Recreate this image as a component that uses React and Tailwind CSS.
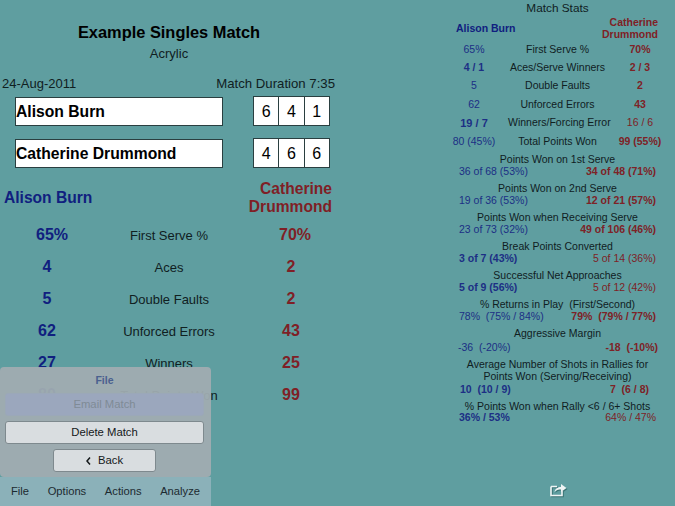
import React from "react";

const LEFT_STATS = [
  ["65%", "First Serve %", "70%"],
  ["4", "Aces", "2"],
  ["5", "Double Faults", "2"],
  ["62", "Unforced Errors", "43"],
  ["27", "Winners", "25"],
  ["80", "Total Points Won", "99"],
];

// [left, label, right, left bold, right bold, row height]
const TOP_ROWS = [
  ["65%", "First Serve %", "70%", false, true, 18],
  ["4 / 1", "Aces/Serve Winners", "2 / 3", true, true, 18],
  ["5", "Double Faults", "2", false, true, 18],
  ["62", "Unforced Errors", "43", false, true, 19],
  ["19 / 7", "Winners/Forcing Error", "16 / 6", true, false, 18],
  ["80 (45%)", "Total Points Won", "99 (55%)", false, true, 19],
];

const BLOCKS = [
  ["Points Won on 1st Serve", "36 of 68 (53%)", "34 of 48 (71%)", false, true],
  ["Points Won on 2nd Serve", "19 of 36 (53%)", "12 of 21 (57%)", false, true],
  ["Points Won when Receiving Serve", "23 of 73 (32%)", "49 of 106 (46%)", false, true],
  ["Break Points Converted", "3 of 7 (43%)", "5 of 14 (36%)", true, false],
  ["Successful Net Approaches", "5 of 9 (56%)", "5 of 12 (42%)", true, false],
  ["% Returns in Play  (First/Second)", "78%  (75% / 84%)", "79%  (79% / 77%)", false, true],
];

function NameRow({ name, scores }) {
  return (
    <div className="flex h-[30px] items-center pl-[15px]">
      <div className="flex h-[29px] w-[208px] items-center border border-[#2a3f40] bg-white pt-[2px] text-[15.7px] font-bold text-black">
        {name}
      </div>
      <div className="ml-[30px] flex h-[30px] w-[77px] border border-[#2a3f40] bg-white">
        {scores.map((s, i) => (
          <div
            key={i}
            className={`flex flex-1 items-center justify-center pt-[2px] text-[16px] text-black ${i > 0 ? "border-l border-[#2a3f40]" : ""}`}
          >
            {s}
          </div>
        ))}
      </div>
    </div>
  );
}

function ValuePair({ left, right, leftBold, rightBold }) {
  return (
    <div className="flex h-[12px] items-center justify-between pl-[19px] pr-[19px] leading-[12px]">
      <span className={`whitespace-pre text-[#1c2f85] ${leftBold ? "font-bold" : ""}`}>{left}</span>
      <span className={`whitespace-pre text-[#7e2226] ${rightBold ? "font-bold" : ""}`}>{right}</span>
    </div>
  );
}

function MenuButton({ children, className }) {
  return (
    <div className={`flex items-center justify-center rounded-[3px] border text-[11.3px] ${className}`}>
      {children}
    </div>
  );
}

export default function App() {
  return (
    <div className="relative flex h-[506px] w-[675px] overflow-hidden bg-[#5f9ea0] font-['Liberation_Sans',sans-serif] text-[#10201f]">
      {/* match summary */}
      <div className="w-[338px] shrink-0">
        <h1 className="pt-[23px] text-center text-[16.4px] font-bold leading-[18px] text-black">Example Singles Match</h1>
        <p className="mt-[5px] text-center text-[13px] leading-[16px]">Acrylic</p>
        <div className="mt-[14px] flex h-[15px] items-center justify-between pl-[2px] pr-[3px] text-[13px]">
          <span>24-Aug-2011</span>
          <span className="text-[13.2px]">Match Duration 7:35</span>
        </div>
        <div className="mt-[5px] flex flex-col gap-[12px]">
          <NameRow name="Alison Burn" scores={[6, 4, 1]} />
          <NameRow name="Catherine Drummond" scores={[4, 6, 6]} />
        </div>
        <div className="mt-[11px] flex h-[38px] items-center justify-between pl-[4px] pr-[6px] text-[15.6px] font-bold">
          <span className="text-[#10207f]">Alison Burn</span>
          <span className="text-right leading-[18px] text-[#7f1f26]">
            Catherine
            <br />
            Drummond
          </span>
        </div>
        <div className="mt-[2px]">
          {LEFT_STATS.map(([l, label, r], i) => (
            <div key={label} className="grid h-[32px] grid-cols-[94px_150px_94px] items-center text-center">
              <span className={`text-[16px] font-bold text-[#10207f] ${i === 0 ? "pl-[10px]" : ""}`}>{l}</span>
              <span className="pt-[2px] text-[13px]">{label}</span>
              <span className={`text-[16px] font-bold text-[#7f1f26] ${i === 0 ? "pl-[8px]" : ""}`}>{r}</span>
            </div>
          ))}
        </div>
      </div>

      {/* match stats */}
      <div className="ml-[102px] w-[235px] text-center text-[10.5px]">
        <div className="h-[16px] text-[11.8px] leading-[16px]">Match Stats</div>
        <div className="flex h-[24px] items-center justify-between pl-[16px] pr-[17px] font-bold leading-[12px]">
          <span className="text-[#10207f]">Alison Burn</span>
          <span className="text-right text-[#7f1f26]">
            Catherine
            <br />
            Drummond
          </span>
        </div>
        <div className="h-[1px]" />
        {TOP_ROWS.map(([l, label, r, lb, rb, h]) => (
          <div
            key={label}
            className="grid grid-cols-[68px_99px_66px] items-center"
            style={{ height: h }}
          >
            <span className={`text-[#1c2f85] ${lb ? "font-bold" : ""} ${label.startsWith("Winners") ? "text-[11px]" : ""}`}>{l}</span>
            <span className="whitespace-nowrap">{label}</span>
            <span className={`text-[#7e2226] ${rb ? "font-bold" : ""}`}>{r}</span>
          </div>
        ))}
        <div className="mt-[2px] flex flex-col gap-[5px]">
          {BLOCKS.map(([label, l, r, lb, rb]) => (
            <div key={label}>
              <div className="h-[12px] whitespace-pre leading-[12px]">{label}</div>
              <ValuePair left={l} right={r} leftBold={lb} rightBold={rb} />
            </div>
          ))}
        </div>
        <div className="mt-[5px] h-[12px] leading-[12px]">Aggressive Margin</div>
        <div className="mt-[2px] -ml-[1px] -mr-[2px]">
          <ValuePair left="-36  (-20%)" right="-18  (-10%)" rightBold />
        </div>
        <div className="mt-[5px] leading-[12px]">
          Average Number of Shots in Rallies for
          <br />
          Points Won (Serving/Receiving)
        </div>
        <div className="mt-[1px] pl-[1px] pr-[7px]">
          <ValuePair left="10  (10 / 9)" right="7  (6 / 8)" leftBold rightBold />
        </div>
        <div className="mt-[5px] h-[12px] leading-[12px]">% Points Won when Rally &lt;6 / 6+ Shots</div>
        <div className="-mt-[1px]">
          <ValuePair left="36% / 53%" right="64% / 47%" leftBold />
        </div>
      </div>

      {/* share icon */}
      <svg className="absolute left-[550px] top-[482px] drop-shadow-[1px_1px_0_rgba(20,70,70,0.5)]" width="17" height="15" viewBox="0 0 17 15" fill="none">
        <path d="M1 4.5H7M1 4.5V13.5H12V9" stroke="#eef4f4" strokeWidth="1.6" />
        <path d="M4.5 10C5 6.5 8 5 11 5V2L16.5 6L11 10V7.5C8.5 7.5 6 8 4.5 10Z" fill="#eef4f4" />
      </svg>

      {/* popover menu */}
      <div className="absolute left-0 top-[367px] flex h-[110px] w-[211px] flex-col rounded-[4px] bg-[#a0acb1]/95 pl-[5px] pr-[7px]">
        <div className="mt-[7px] h-[12px] text-center text-[10.5px] font-bold leading-[12px] text-[#4a608f]">File</div>
        <MenuButton className="mt-[7px] h-[23px] border-[#9ba8b8] bg-[#9ba7bd] text-[#7f8b96]">Email Match</MenuButton>
        <MenuButton className="mt-[5px] h-[23px] border-[#7e898e] bg-[#d9dde0] text-[#14181a]">Delete Match</MenuButton>
        <MenuButton className="mx-auto mt-[5px] h-[23px] w-[103px] gap-[7px] border-[#7e898e] bg-[#d9dde0] text-[#14181a]">
          <svg width="5" height="8" viewBox="0 0 5 8" fill="none">
            <path d="M4 0.5L1 4L4 7.5" stroke="#14181a" strokeWidth="1.5" />
          </svg>
          Back
        </MenuButton>
      </div>

      {/* toolbar */}
      <div className="absolute bottom-0 left-0 flex h-[29px] w-[211px] items-center justify-between bg-[#8bb1b9] pl-[11px] pr-[11px] text-[11.2px] text-[#1c2a30]">
        <span>File</span>
        <span>Options</span>
        <span>Actions</span>
        <span>Analyze</span>
      </div>
    </div>
  );
}
